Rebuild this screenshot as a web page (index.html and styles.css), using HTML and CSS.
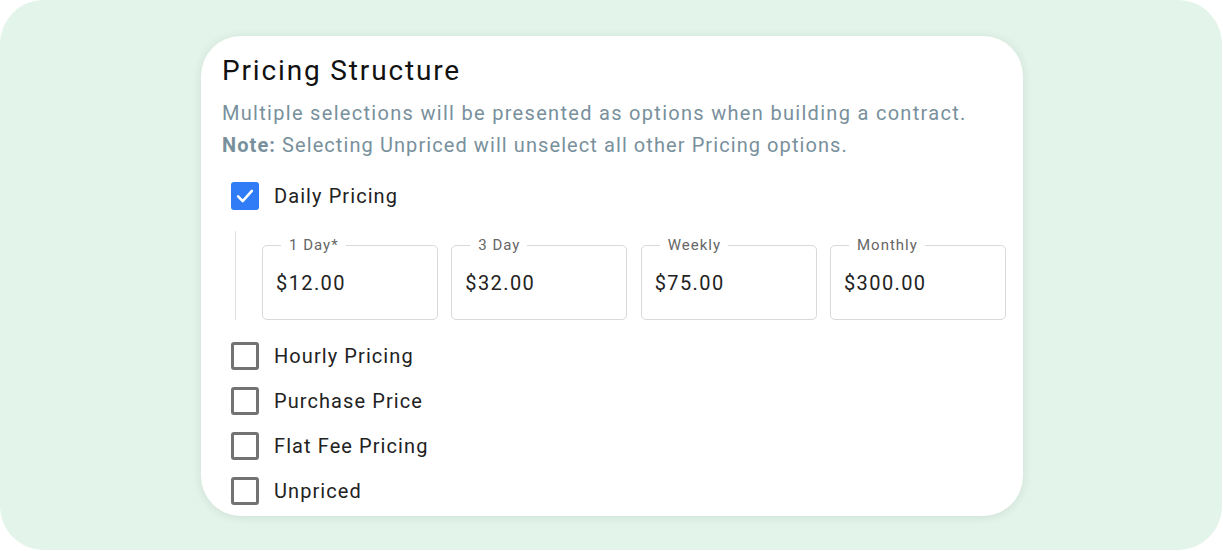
FILE: index.html
```html
<!DOCTYPE html>
<html lang="en">
<head>
<meta charset="utf-8">
<title>Pricing Structure</title>
<link rel="stylesheet" href="styles.css">
</head>
<body>
<div class="stage">
  <section class="card">
    <h1 class="title">Pricing Structure</h1>
    <p class="hint">Multiple selections will be presented as options when building a contract.<br><span class="hint-note"><b>Note:</b> Selecting Unpriced will unselect all other Pricing options.</span></p>

    <label class="option">
      <span class="box checked">
        <svg viewBox="0 0 24 24" width="24" height="24"><path d="M4.5 12.5l5 5L19.5 6.5" fill="none" stroke="#fff" stroke-width="2.8" stroke-linecap="round" stroke-linejoin="round"/></svg>
      </span>
      <span class="option-label">Daily Pricing</span>
    </label>

    <div class="fields">
      <div class="field"><span class="field-label">1 Day*</span><span class="field-value">$12.00</span></div>
      <div class="field"><span class="field-label">3 Day</span><span class="field-value">$32.00</span></div>
      <div class="field"><span class="field-label">Weekly</span><span class="field-value">$75.00</span></div>
      <div class="field"><span class="field-label">Monthly</span><span class="field-value">$300.00</span></div>
    </div>

    <label class="option"><span class="box"></span><span class="option-label">Hourly Pricing</span></label>
    <label class="option"><span class="box"></span><span class="option-label">Purchase Price</span></label>
    <label class="option"><span class="box"></span><span class="option-label">Flat Fee Pricing</span></label>
    <label class="option"><span class="box"></span><span class="option-label">Unpriced</span></label>
  </section>
</div>
</body>
</html>
```

FILE: styles.css
```css
* { box-sizing: border-box; }

html, body {
  margin: 0;
  padding: 0;
  background: #ffffff;
  font-family: Roboto, "Liberation Sans", Arial, sans-serif;
}

.stage {
  width: 1222px;
  height: 550px;
  background: #e3f4ea;
  border-radius: 44px;
  padding: 36px 0 0 201px;
  overflow: hidden;
}

.card {
  width: 822px;
  height: 480px;
  background: #ffffff;
  border-radius: 40px;
  box-shadow: 0 1px 10px rgba(60, 90, 70, 0.12);
  padding: 18px 0 0 21px;
}

.title {
  margin: 0 0 9px 0;
  font-size: 28px;
  line-height: 34px;
  font-weight: 400;
  letter-spacing: 1.85px;
  color: #111111;
}

.hint {
  margin: 0;
  font-size: 20px;
  line-height: 32px;
  letter-spacing: 1.3px;
  color: #78909c;
}

.hint-note {
  letter-spacing: 1.08px;
}

.hint b {
  font-weight: 700;
}

.option {
  display: flex;
  align-items: center;
  height: 45px;
  padding-left: 9px;
}

.hint + .option {
  margin-top: 12px;
}

.box {
  width: 28px;
  height: 28px;
  border: 3px solid #737373;
  border-radius: 3px;
  flex: none;
  display: flex;
  align-items: center;
  justify-content: center;
}

.box.checked {
  background: #2f7cf6;
  border-color: #2f7cf6;
}

.option-label {
  margin-left: 15px;
  font-size: 20px;
  letter-spacing: 1.08px;
  color: #222222;
}

.fields {
  margin: 13px 0 13px 13px;
  border-left: 1px solid #e2e2e2;
  padding: 14px 0 0 26px;
  display: flex;
  gap: 13.33px;
}

.field {
  position: relative;
  width: 176px;
  height: 75px;
  border: 1px solid #d9d9d9;
  border-radius: 5px;
  display: flex;
  align-items: center;
  padding-left: 13px;
}

.field-label {
  position: absolute;
  top: -10px;
  left: 18px;
  padding: 0 7px 0 8px;
  background: #ffffff;
  font-size: 15px;
  line-height: 18px;
  letter-spacing: 1px;
  color: #666666;
}

.field-value {
  font-size: 20px;
  line-height: 24px;
  letter-spacing: 1.4px;
  color: #222222;
}
```
